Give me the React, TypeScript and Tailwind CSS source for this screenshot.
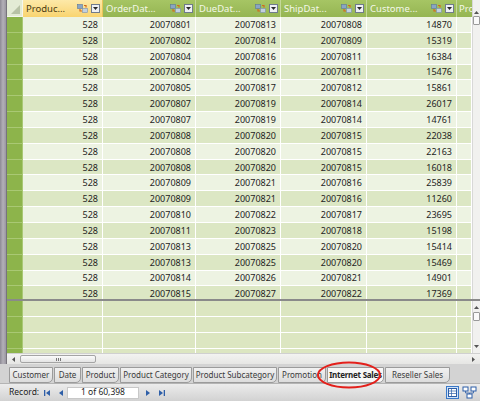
import React from "react";

const rows: [string, string, string, string][] = [
  ["20070801", "20070813", "20070808", "14870"],
  ["20070802", "20070814", "20070809", "15319"],
  ["20070804", "20070816", "20070811", "16384"],
  ["20070804", "20070816", "20070811", "15476"],
  ["20070805", "20070817", "20070812", "15861"],
  ["20070807", "20070819", "20070814", "26017"],
  ["20070807", "20070819", "20070814", "14761"],
  ["20070808", "20070820", "20070815", "22038"],
  ["20070808", "20070820", "20070815", "22163"],
  ["20070808", "20070820", "20070815", "16018"],
  ["20070809", "20070821", "20070816", "25839"],
  ["20070809", "20070821", "20070816", "11260"],
  ["20070810", "20070822", "20070817", "23695"],
  ["20070811", "20070823", "20070818", "15198"],
  ["20070813", "20070825", "20070820", "15414"],
  ["20070813", "20070825", "20070820", "15469"],
  ["20070814", "20070826", "20070821", "14901"],
  ["20070815", "20070827", "20070822", "17369"],
];

const cols = "grid grid-cols-[16px_80px_93px_85px_86px_90px_15px]";

function RelIcon() {
  return (
    <svg width="11" height="9" viewBox="0 0 11 9" className="shrink-0">
      <rect x="0.5" y="0.5" width="5" height="4" fill="#8aa5c4" stroke="#5a7899" strokeWidth="0.6" />
      <rect x="5.5" y="4.5" width="5" height="4" fill="#c2d0df" stroke="#7890ad" strokeWidth="0.6" />
      <path d="M3 5 L3 7 L5 7" fill="none" stroke="#d2691e" strokeWidth="1.2" />
      <path d="M7 1.5 L9 1.5 L9 3.5" fill="none" stroke="#d2691e" strokeWidth="1.2" />
    </svg>
  );
}

function DropBox() {
  return (
    <div className="w-[9px] h-[9px] shrink-0 bg-[#eef0f3] border border-[#6f7b8c] flex items-center justify-center">
      <svg width="5" height="3" viewBox="0 0 5 3">
        <path d="M0 0 L5 0 L2.5 3 Z" fill="#2a2a2a" />
      </svg>
    </div>
  );
}

function Header({ label, selected }: { label: string; selected?: boolean }) {
  return (
    <div
      className={
        selected
          ? "h-[17px] flex items-center pl-[3px] pr-[2px] border-r border-[#e9c45a] bg-gradient-to-b from-[#fde9a8] to-[#f9d46f] text-[#4a3b12]"
          : "h-[17px] flex items-center pl-[3px] pr-[2px] border-r border-[#c4d89a] bg-gradient-to-b from-[#a6c564] to-[#95b552] text-[#f3f8e8]"
      }
    >
      <span className="flex-1 whitespace-nowrap text-[9.5px] leading-none">{label}</span>
      <div className="flex items-center gap-[3px]">
        <RelIcon />
        <DropBox />
      </div>
    </div>
  );
}

function Cell({ v, odd }: { v?: string; odd: boolean }) {
  return (
    <div
      className={`h-[15.85px] border-r border-b border-white flex items-center justify-end pr-[4px] text-[9px] leading-none text-[#1e1e1e] ${
        odd ? "bg-[#edf3e2]" : "bg-[#dce7c4]"
      }`}
    >
      {v}
    </div>
  );
}

function VScroll({ h }: { h: string }) {
  return (
    <div className={`w-[8px] ${h} bg-[#f1f1ef] border-l border-[#d8d8d8] flex flex-col items-center pt-[11px]`}>
      <svg width="5" height="3" viewBox="0 0 5 3">
        <path d="M0 3 L5 3 L2.5 0 Z" fill="#555" />
      </svg>
      <div className="mt-[2px] w-[7px] h-[9px] bg-[#fafafa] border border-[#9a9a9a] rounded-[1px]" />
    </div>
  );
}

function Tab({ label, w, active }: { label: string; w: string; active?: boolean }) {
  return (
    <div
      className={`h-[16px] ${w} shrink-0 flex items-center justify-center whitespace-nowrap border border-[#9b9b9b] rounded-br-[5px] text-[8px] leading-none ${
        active
          ? "bg-[#f7f7f7] font-bold text-[#222] tracking-[-0.25px]"
          : "bg-gradient-to-b from-[#f1f1f1] to-[#dcdcdc] text-[#3a3a3a]"
      }`}
    >
      {label}
    </div>
  );
}

function NavFirst() {
  return (
    <svg width="6" height="6" viewBox="0 0 6 6">
      <rect x="0" y="0" width="1.3" height="6" fill="#2e5fa8" />
      <path d="M6 0 L6 6 L2 3 Z" fill="#2e5fa8" />
    </svg>
  );
}
function NavPrev() {
  return (
    <svg width="4" height="6" viewBox="0 0 4 6">
      <path d="M4 0 L4 6 L0 3 Z" fill="#2e5fa8" />
    </svg>
  );
}
function NavNext() {
  return (
    <svg width="4" height="6" viewBox="0 0 4 6">
      <path d="M0 0 L0 6 L4 3 Z" fill="#2e5fa8" />
    </svg>
  );
}
function NavLast() {
  return (
    <svg width="6" height="6" viewBox="0 0 6 6">
      <path d="M0 0 L0 6 L4 3 Z" fill="#2e5fa8" />
      <rect x="4.7" y="0" width="1.3" height="6" fill="#2e5fa8" />
    </svg>
  );
}

export default function App() {
  return (
    <div className="relative w-[480px] h-[401px] overflow-hidden bg-[#d5d5d5] flex flex-col font-['Noto_Sans',sans-serif]">
      <div className="flex h-[364px]">
        {/* left frame strip */}
        <div className="w-[7px] h-full bg-gradient-to-r from-[#8d8a94] via-[#b3b0b8] to-[#9a97a0] border-r border-[#77747c]" />
        <div className="flex flex-col w-[473px]">
          <div className="flex">
            {/* top grid */}
            <div className="w-[465px] h-[299px] overflow-hidden">
              <div className={cols}>
                <div className="h-[17px] border-r border-b border-[#f4f6ef] bg-[#e3ebd5] relative">
                  <svg width="9" height="9" viewBox="0 0 9 9" className="absolute right-[2px] bottom-[2px]">
                    <path d="M9 0 L9 9 L0 9 Z" fill="#b7c2a6" />
                  </svg>
                </div>
                <Header label="Produc..." selected />
                <Header label="OrderDat..." />
                <Header label="DueDat..." />
                <Header label="ShipDat..." />
                <Header label="Custome..." />
                <div className="h-[17px] flex items-center pl-[2px] bg-gradient-to-b from-[#a6c564] to-[#95b552] text-[#f3f8e8] text-[9.5px] leading-none overflow-hidden whitespace-nowrap">
                  Pro
                </div>
                {rows.map((r, i) => {
                  const odd = i % 2 === 0;
                  return (
                    <React.Fragment key={i}>
                      <div className="h-[15.85px] bg-[#8db44b] border-r border-b border-[#a9c874]" />
                      <Cell v="528" odd={odd} />
                      <Cell v={r[0]} odd={odd} />
                      <Cell v={r[1]} odd={odd} />
                      <Cell v={r[2]} odd={odd} />
                      <Cell v={r[3]} odd={odd} />
                      <Cell odd={odd} />
                    </React.Fragment>
                  );
                })}
              </div>
            </div>
            <VScroll h="h-[299px]" />
          </div>
          <div className="h-[2px] bg-[#8a8a8a]" />
          <div className="flex">
            <div className="w-[465px] h-[52px] overflow-hidden">
              <div className={cols}>
                {[0, 1, 2, 3].map((i) => (
                  <React.Fragment key={i}>
                    <div className="h-[16px] bg-[#8db44b] border-r border-b border-[#a9c874]" />
                    {[0, 1, 2, 3, 4, 5].map((j) => (
                      <div key={j} className="h-[16px] bg-[#dce6c1] border-r border-b border-white" />
                    ))}
                  </React.Fragment>
                ))}
              </div>
            </div>
            <div className="w-[8px] h-[52px] bg-[#f1f1ef] border-l border-[#d8d8d8] flex flex-col items-center pt-[5px]">
              <svg width="5" height="3" viewBox="0 0 5 3">
                <path d="M0 3 L5 3 L2.5 0 Z" fill="#555" />
              </svg>
              <div className="mt-[3px] w-[7px] h-[9px] bg-[#fafafa] border border-[#9a9a9a] rounded-[1px]" />
              <div className="flex-1" />
              <svg width="5" height="3" viewBox="0 0 5 3" className="mb-[5px]">
                <path d="M0 0 L5 0 L2.5 3 Z" fill="#555" />
              </svg>
            </div>
          </div>
          {/* horizontal scrollbar */}
          <div className="h-[11px] flex items-center bg-gradient-to-b from-[#f3f3f1] to-[#e6e6e4] border-t border-[#d0d0d0]">
            <div className="w-[13px] flex justify-center">
              <svg width="3" height="5" viewBox="0 0 3 5">
                <path d="M3 0 L3 5 L0 2.5 Z" fill="#555" />
              </svg>
            </div>
            <div className="w-[76px] h-[8px] bg-gradient-to-b from-[#fbfbfb] to-[#e4e4e4] border border-[#a4a4a4] rounded-[2px] flex items-center justify-center gap-[1px]">
              <div className="w-px h-[3px] bg-[#777]" />
              <div className="w-px h-[3px] bg-[#777]" />
              <div className="w-px h-[3px] bg-[#777]" />
            </div>
            <div className="flex-1" />
            <div className="w-[13px] flex justify-center">
              <svg width="3" height="5" viewBox="0 0 3 5">
                <path d="M0 0 L0 5 L3 2.5 Z" fill="#555" />
              </svg>
            </div>
          </div>
        </div>
      </div>
      {/* tabs */}
      <div className="h-[19px] flex items-start pt-[3px] pl-[9px] gap-px bg-[#d3d3d3]">
        <Tab label="Customer" w="w-[44px]" />
        <Tab label="Date" w="w-[27px]" />
        <Tab label="Product" w="w-[37px]" />
        <Tab label="Product Category" w="w-[72px]" />
        <Tab label="Product Subcategory" w="w-[84px]" />
        <Tab label="Promotion" w="w-[48px]" />
        <Tab label="Internet Sales" w="w-[57px]" active />
        <Tab label="Reseller Sales" w="w-[65px]" />
      </div>
      {/* record bar */}
      <div className="h-[18px] flex items-center bg-gradient-to-b from-[#ececec] to-[#d2d2d2] border-t border-[#b4b4b4] text-[8.5px] leading-none text-[#222]">
        <span className="ml-[9px] w-[35px]">Record:</span>
        <NavFirst />
        <div className="w-[9px]" />
        <NavPrev />
        <div className="ml-[4px] w-[72px] h-[12px] bg-white border border-[#c8c8c8] flex items-center justify-center">
          1 of 60,398
        </div>
        <div className="w-[7px]" />
        <NavNext />
        <div className="w-[9px]" />
        <NavLast />
        <div className="flex-1" />
        <div className="w-[13px] h-[13px] border border-[#3a78c8] bg-[#cfe2f8] flex items-center justify-center">
          <svg width="9" height="9" viewBox="0 0 9 9">
            <rect x="0.5" y="0.5" width="8" height="8" fill="#fff" stroke="#2d5ea8" />
            <path d="M0.5 3 H8.5 M0.5 5.5 H8.5 M3.5 0.5 V8.5" stroke="#2d5ea8" strokeWidth="0.7" />
          </svg>
        </div>
        <div className="w-[3px]" />
        <svg width="15" height="13" viewBox="0 0 15 13" className="mr-[3px]">
          <rect x="1" y="1" width="5" height="4" fill="#fff" stroke="#2d5ea8" />
          <rect x="9" y="1" width="5" height="4" fill="#fff" stroke="#2d5ea8" />
          <rect x="5" y="8" width="5" height="4" fill="#fff" stroke="#2d5ea8" />
          <path d="M3.5 5 V7 H7.5 V8 M11.5 5 V7 H7.5" fill="none" stroke="#2d5ea8" strokeWidth="0.8" />
        </svg>
      </div>
      {/* red annotation ellipse over the Internet Sales tab */}
      <svg width="66" height="28" viewBox="0 0 66 28" className="absolute left-[316px] top-[361px] z-10 pointer-events-none">
        <ellipse cx="33" cy="14" rx="31" ry="12.5" fill="none" stroke="#e3201b" strokeWidth="2" />
      </svg>
    </div>
  );
}
